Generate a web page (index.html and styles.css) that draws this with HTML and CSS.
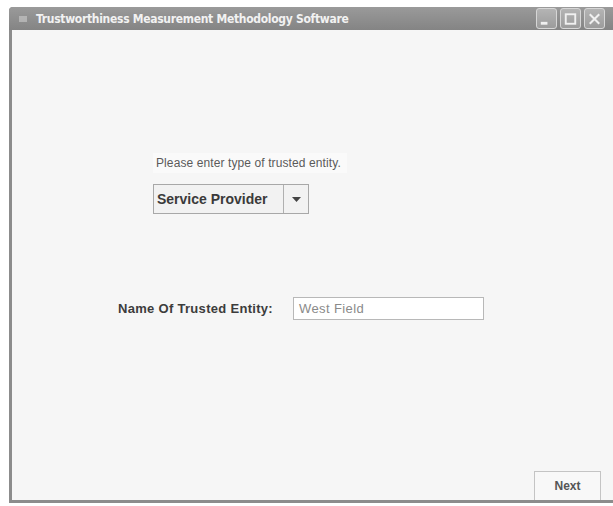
FILE: index.html
```html
<!DOCTYPE html>
<html>
<head>
<meta charset="utf-8">
<title>Trustworthiness Measurement Methodology Software</title>
<link rel="stylesheet" href="styles.css">
</head>
<body>
<div class="window">
  <div class="titlebar">
    <span class="app-icon">
      <svg width="10" height="10" viewBox="0 0 10 10"><path d="M1 3h8M1 5h8M1 7h8" stroke="#d8d8d8" stroke-width="1"/></svg>
    </span>
    <span class="title">Trustworthiness Measurement Methodology Software</span>
    <div class="controls">
      <span class="ctl"><svg width="20" height="20" viewBox="0 0 20 20"><rect x="4" y="13" width="7" height="3" fill="#f0f0f0"/></svg></span>
      <span class="ctl"><svg width="20" height="20" viewBox="0 0 20 20"><rect x="5" y="5" width="10" height="10" fill="none" stroke="#f0f0f0" stroke-width="2"/></svg></span>
      <span class="ctl"><svg width="20" height="20" viewBox="0 0 20 20"><path d="M5 5l10 10M15 5L5 15" stroke="#f0f0f0" stroke-width="2.2"/></svg></span>
    </div>
  </div>
  <div class="content">
    <div class="type-group">
      <div class="prompt">Please enter type of trusted entity.</div>
      <div class="combo">
        <span class="combo-value">Service Provider</span>
        <span class="combo-arrow"><svg width="9" height="5" viewBox="0 0 9 5"><path d="M0 0h9L4.5 5z" fill="#444"/></svg></span>
      </div>
    </div>
    <div class="name-row">
      <span class="name-label">Name Of Trusted Entity:</span>
      <div class="field">West Field</div>
    </div>
    <div class="footer">
      <button class="next">Next</button>
    </div>
  </div>
</div>
</body>
</html>
```

FILE: styles.css
```css
html, body {
  margin: 0;
  padding: 0;
  background: #ffffff;
}

body {
  padding: 7px 0 0 9px;
  font-family: "Liberation Sans", Arial, sans-serif;
}

.window {
  width: 606px;
  height: 496px;
  display: flex;
  flex-direction: column;
  background: #8c8c8c;
  border-radius: 4px 4px 0 0;
  box-sizing: border-box;
  padding: 0 0 3px 3px;
}

.titlebar {
  height: 23px;
  display: flex;
  align-items: center;
  padding-left: 9px;
  background: linear-gradient(#9a9a9a, #848484);
  border-radius: 4px 4px 0 0;
  margin-left: -3px;
}

.app-icon {
  display: flex;
  width: 14px;
}

.title {
  margin-left: 4px;
  color: #f2f2f2;
  font-family: "DejaVu Sans Condensed", "DejaVu Sans", sans-serif;
  font-size: 12px;
  font-weight: bold;
  letter-spacing: -0.3px;
}

.controls {
  margin-left: auto;
  display: flex;
  gap: 3px;
  margin-right: 10px;
}

.ctl {
  width: 19px;
  height: 19px;
  display: flex;
  align-items: center;
  justify-content: center;
  border: 1px solid #d6d6d6;
  border-radius: 3px;
  background: linear-gradient(#b4b4b4, #9c9c9c);
}

.content {
  flex: 1;
  background: #f6f6f6;
  display: flex;
  flex-direction: column;
}

.type-group {
  margin: 123px 0 0 141px;
}

.prompt {
  display: inline-block;
  padding: 3px 6px 3px 3px;
  background: #fafafa;
  color: #5a5a5a;
  font-size: 12px;
  letter-spacing: 0.1px;
}

.combo {
  margin-top: 11px;
  width: 156px;
  height: 30px;
  display: flex;
  border: 1px solid #a8a8a8;
  box-sizing: border-box;
  background: #f2f2f2;
}

.combo-value {
  flex: 1;
  display: flex;
  align-items: center;
  padding-left: 3px;
  font-size: 14px;
  font-weight: bold;
  color: #3a3a3a;
  border-right: 1px solid #b0b0b0;
}

.combo-arrow {
  width: 24px;
  display: flex;
  align-items: center;
  justify-content: center;
}

.name-row {
  margin: 83px 0 0 106px;
  display: flex;
  align-items: center;
}

.name-label {
  font-size: 13px;
  font-weight: bold;
  color: #3c3c3c;
  letter-spacing: 0.3px;
  width: 175px;
}

.field {
  width: 191px;
  height: 23px;
  box-sizing: border-box;
  border: 1px solid #b8b8b8;
  background: #ffffff;
  color: #8a8a8a;
  font-size: 13px;
  letter-spacing: 0.4px;
  display: flex;
  align-items: center;
  padding-left: 5px;
}

.footer {
  margin-top: auto;
  display: flex;
  justify-content: flex-end;
  padding-right: 14px;
}

.next {
  width: 67px;
  height: 29px;
  border: 1px solid #c4c4c4;
  border-bottom: none;
  background: #f8f8f8;
  font-family: "Liberation Sans", Arial, sans-serif;
  font-size: 12px;
  font-weight: bold;
  color: #555;
  padding: 0;
}
```
